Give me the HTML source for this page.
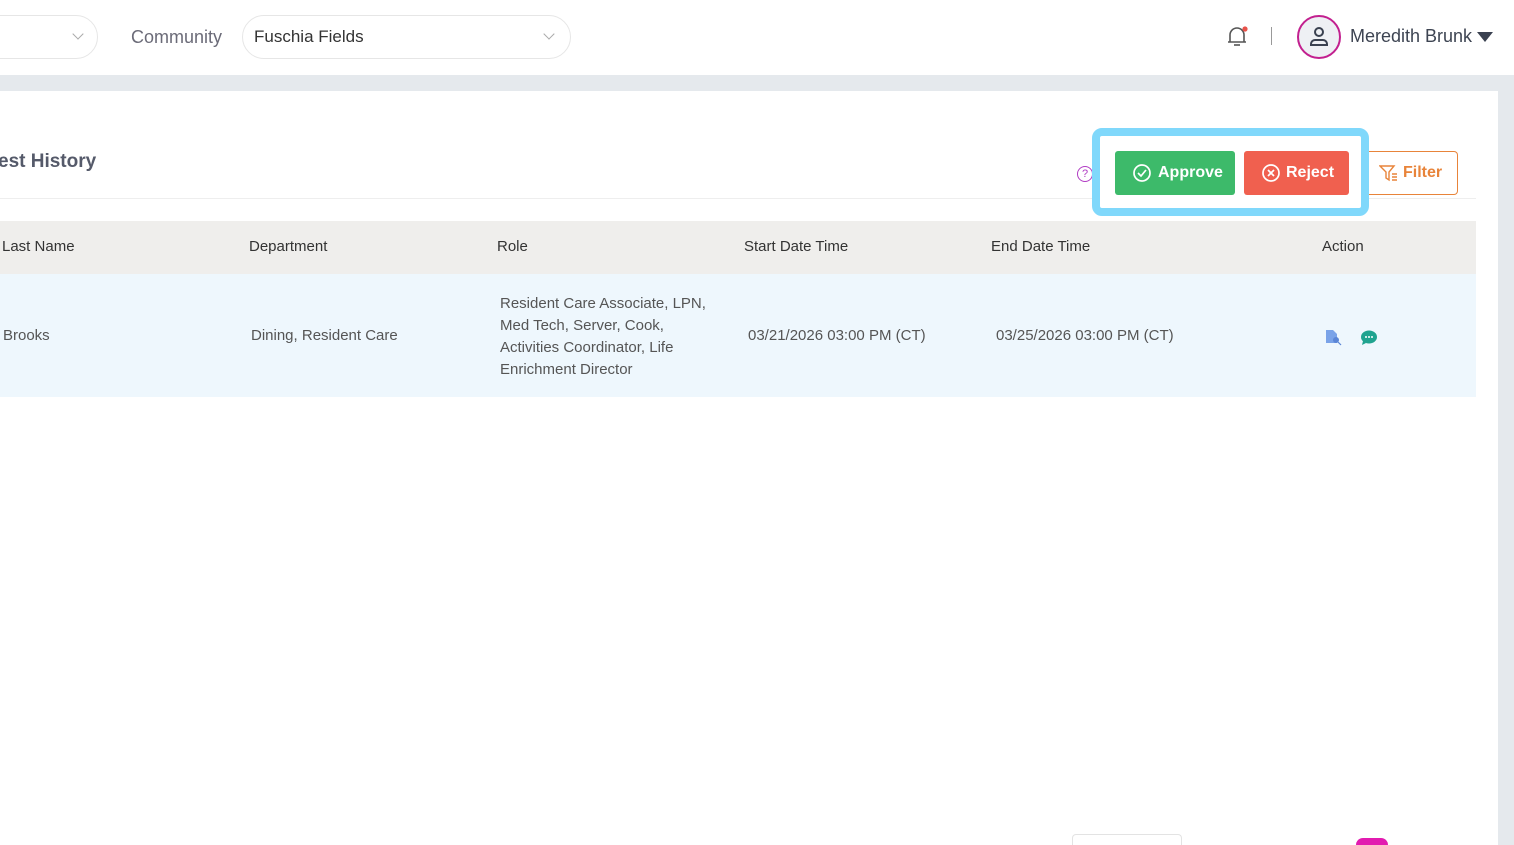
<!DOCTYPE html>
<html style="overflow:hidden;height:845px"><head><style>
*{margin:0;padding:0;box-sizing:border-box}
body{width:1514px;height:845px;overflow:hidden;background:#e5e9ed;font-family:"Liberation Sans",sans-serif;position:relative;color:#333}
.hdr{position:absolute;left:0;top:0;width:1514px;height:75px;background:#fff}
.card{position:absolute;left:0;top:91px;width:1498px;height:754px;background:#fff}
.abs{position:absolute}
.sel{position:absolute;top:15px;height:44px;border:1px solid #e6e6e6;border-radius:22px;background:#fff}
.chev{position:absolute;width:8px;height:8px;border-right:1.5px solid #aaa;border-bottom:1.5px solid #aaa;transform:rotate(45deg)}
.th{position:absolute;top:238px;font-size:15px;color:#333}
.td{position:absolute;font-size:15px;color:#555}
</style></head><body>
<div class="hdr">
 <div class="sel" style="left:-40px;width:138px"><div class="chev" style="left:113px;top:14px"></div></div>
 <div class="abs" style="left:131px;top:27px;font-size:18px;color:#6b6b78">Community</div>
 <div class="sel" style="left:242px;width:329px"><div class="abs" style="left:11px;top:11px;font-size:17px;color:#333">Fuschia Fields</div><div class="chev" style="left:302px;top:14px"></div></div>
 <svg class="abs" style="left:1224px;top:24px" width="26" height="26" viewBox="0 0 26 26"><path d="M6 18 V11 a7 7 0 0 1 14 0 V18 H4 H22" fill="none" stroke="#555" stroke-width="1.6"/><path d="M10 21h6" stroke="#555" stroke-width="1.6"/><circle cx="21" cy="5" r="2.6" fill="#e8524a"/></svg>
 <div class="abs" style="left:1271px;top:27px;width:1px;height:18px;background:#999"></div>
 <div class="abs" style="left:1297px;top:15px;width:44px;height:44px;border-radius:50%;border:2px solid #c2208f;background:#eef0f4"></div>
 <svg class="abs" style="left:1306px;top:24px" width="26" height="26" viewBox="0 0 26 26"><circle cx="13" cy="8" r="4" fill="none" stroke="#3a4150" stroke-width="2"/><path d="M5 21 v-1 a4 4 0 0 1 4-4 h8 a4 4 0 0 1 4 4 v1z" fill="none" stroke="#3a4150" stroke-width="2"/></svg>
 <div class="abs" style="left:1350px;top:26px;font-size:18px;color:#3d4452">Meredith Brunk</div>
 <div class="abs" style="left:1477px;top:32px;border-left:8px solid transparent;border-right:8px solid transparent;border-top:10px solid #3a4150"></div>
</div>
<div class="card">
 <div class="abs" style="left:-2px;top:60px;font-size:19px;font-weight:bold;color:#555a6a">est History</div>
 <div class="abs" style="left:0;top:107px;width:1476px;height:1px;background:#eee"></div>
 <div class="abs" style="left:0;top:130px;width:1476px;height:53px;background:#efeeec"></div>
 <div class="abs" style="left:0;top:183px;width:1476px;height:123px;background:#eef7fd"></div>
</div>
<div class="abs" style="left:1077px;top:166px;width:16px;height:16px;border:1.3px solid #b13cc4;border-radius:50%;font-size:11px;color:#b13cc4;text-align:center;line-height:14px">?</div>
<div class="abs" style="left:1092px;top:128px;width:277px;height:88px;border:8px solid #80d8fb;border-radius:10px;background:#fff"></div>
<div class="abs" style="left:1115px;top:151px;width:120px;height:44px;background:#3dba6a;border-radius:3px;color:#fff;font-size:16px;font-weight:bold;line-height:44px;padding-left:43px">Approve</div>
<svg class="abs" style="left:1133px;top:164px" width="18" height="18"><circle cx="9" cy="9" r="8" fill="none" stroke="#fff" stroke-width="1.7"/><path d="M5 9l3 3 5-6" fill="none" stroke="#fff" stroke-width="1.7"/></svg>
<div class="abs" style="left:1244px;top:151px;width:105px;height:44px;background:#f0604f;border-radius:3px;color:#fff;font-size:16px;font-weight:bold;line-height:44px;padding-left:42px">Reject</div>
<svg class="abs" style="left:1262px;top:164px" width="18" height="18"><circle cx="9" cy="9" r="8" fill="none" stroke="#fff" stroke-width="1.7"/><path d="M6 6l6 6M12 6l-6 6" stroke="#fff" stroke-width="1.7"/></svg>
<div class="abs" style="left:1369px;top:151px;width:89px;height:44px;border:1px solid #e8843a;border-left:none;border-radius:0 4px 4px 0;color:#e8843a;font-size:16px;font-weight:bold;line-height:42px;padding-left:34px">Filter</div>
<svg class="abs" style="left:1379px;top:164px" width="20" height="18"><path d="M1 2h14l-5 6v8l-3-2v-6z" fill="none" stroke="#e8843a" stroke-width="1.4"/><path d="M13 10h5M13 13h5M13 16h5" stroke="#e8843a" stroke-width="1.4"/></svg>
<div class="th" style="left:2px">Last Name</div>
<div class="th" style="left:249px">Department</div>
<div class="th" style="left:497px">Role</div>
<div class="th" style="left:744px">Start Date Time</div>
<div class="th" style="left:991px">End Date Time</div>
<div class="th" style="left:1322px">Action</div>
<div class="td" style="left:3px;top:327px">Brooks</div>
<div class="td" style="left:251px;top:327px">Dining, Resident Care</div>
<div class="td" style="left:500px;top:293px;line-height:22px;width:220px">Resident Care Associate, LPN, Med Tech, Server, Cook, Activities Coordinator, Life Enrichment Director</div>
<div class="td" style="left:748px;top:327px">03/21/2026 03:00 PM (CT)</div>
<div class="td" style="left:996px;top:327px">03/25/2026 03:00 PM (CT)</div>
<svg class="abs" style="left:1325px;top:329px" width="18" height="17"><path d="M1 1h7l4 4v9H1z" fill="#7aa3e8"/><circle cx="11" cy="11" r="3" fill="#5b86d6"/><path d="M13 13l3 3" stroke="#5b86d6" stroke-width="1.2"/></svg>
<svg class="abs" style="left:1360px;top:329px" width="18" height="17"><ellipse cx="9" cy="8" rx="8" ry="6.5" fill="#1fa38f"/><path d="M3 12l-1 4 4-2z" fill="#1fa38f"/><circle cx="6" cy="8" r="1" fill="#fff"/><circle cx="9" cy="8" r="1" fill="#fff"/><circle cx="12" cy="8" r="1" fill="#fff"/></svg>
<div class="abs" style="left:1072px;top:834px;width:110px;height:11px;border:1px solid #e3e3e3;border-bottom:none;border-radius:4px 4px 0 0;background:#fff"></div>
<div class="abs" style="left:1356px;top:838px;width:32px;height:7px;border-radius:16px 16px 0 0;background:#e21bb0"></div>
</body></html>
